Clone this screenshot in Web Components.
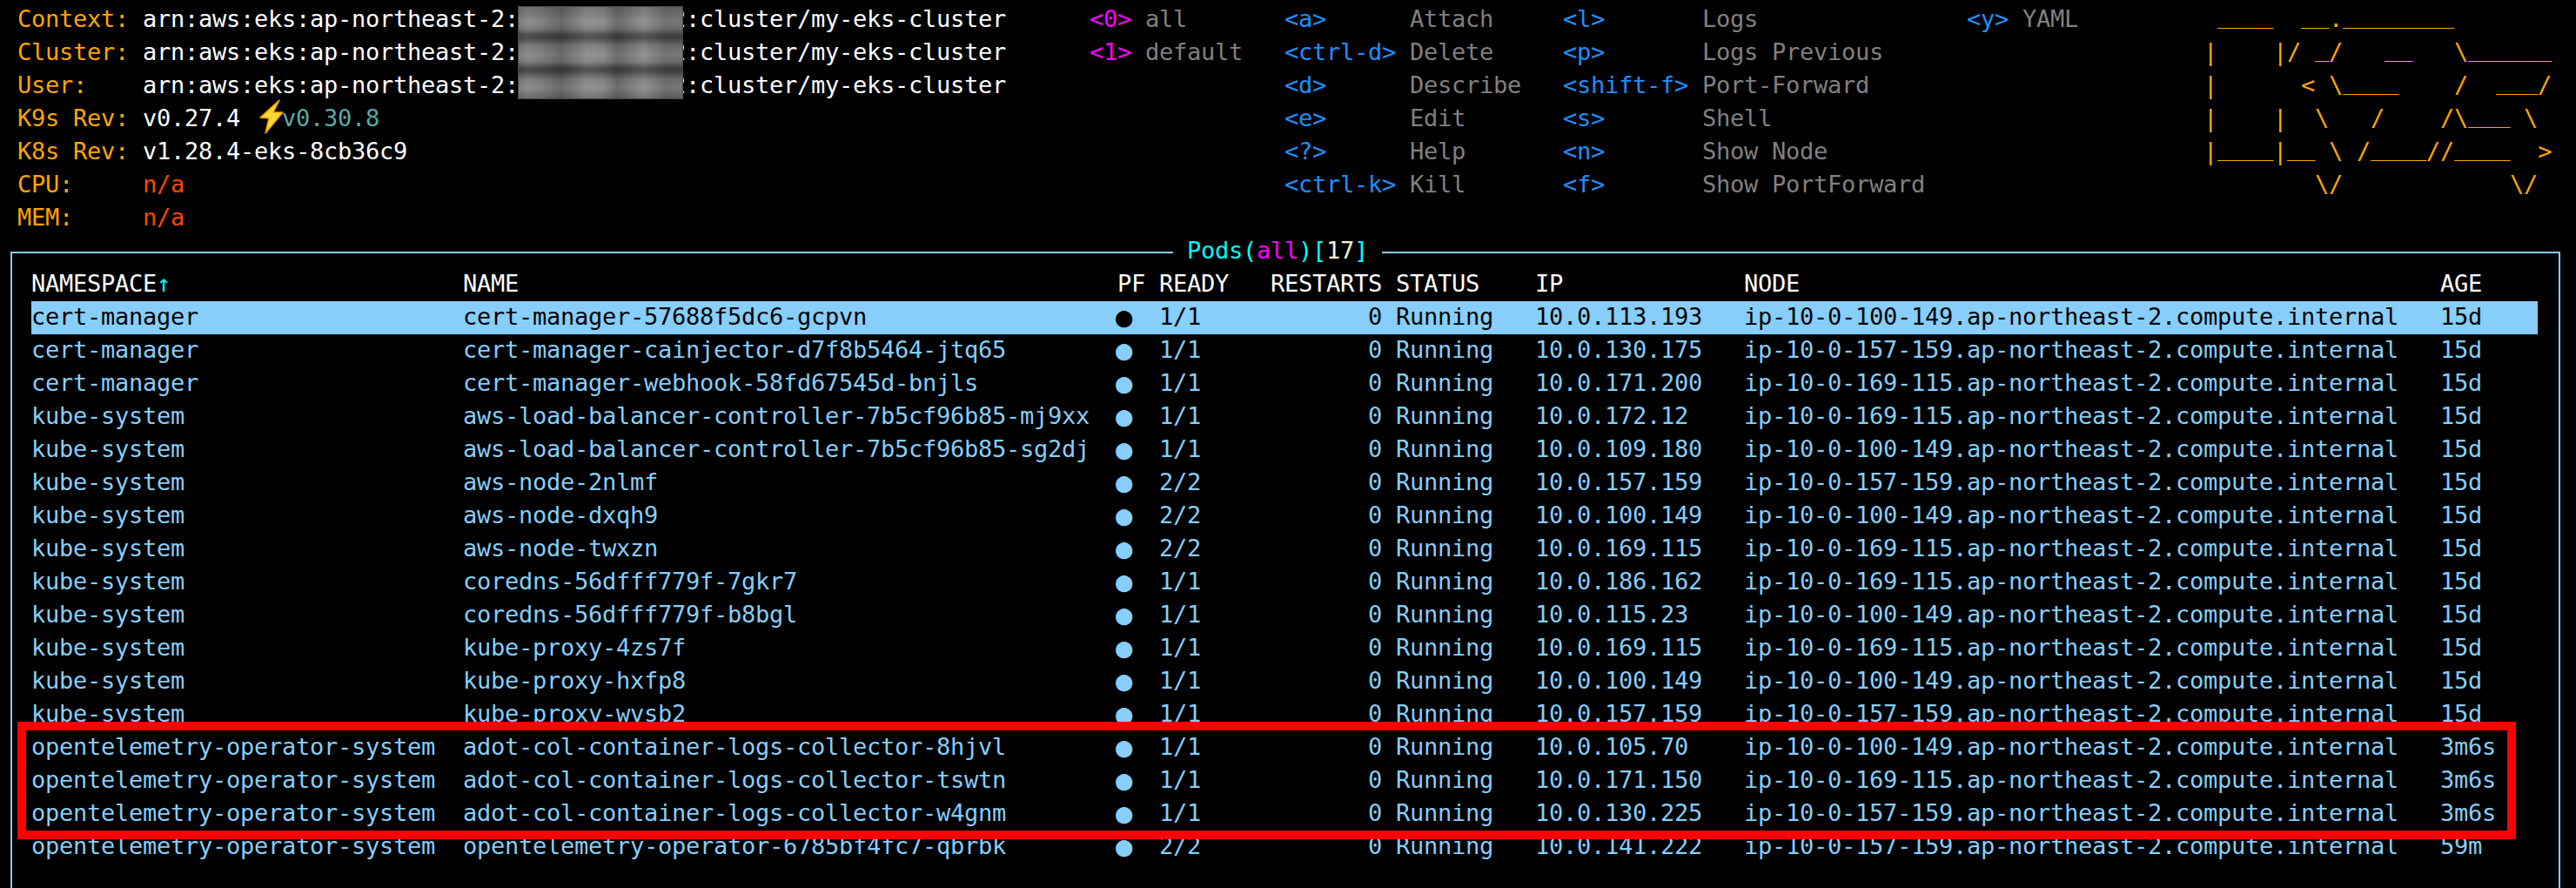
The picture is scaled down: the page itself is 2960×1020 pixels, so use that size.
<!DOCTYPE html>
<html><head><meta charset="utf-8">
<style>
html,body{margin:0;padding:0;background:#000;height:1020px;overflow:hidden}
body{font-family:"DejaVu Sans Mono",monospace;font-size:27px;letter-spacing:-.255px;line-height:36px;color:#fff}
</style></head>
<body>
<k9s-app>
  <k9s-header></k9s-header>
  <k9s-pods>
    <span slot="title"><i style="color:#0ff;font-style:normal">Pods(</i><i style="color:#f0f;font-style:normal">all</i><i style="color:#0ff;font-style:normal">)[</i><i style="color:#ffefd5;font-style:normal">17</i><i style="color:#0ff;font-style:normal">]</i></span>
  </k9s-pods>
</k9s-app>
<script>
const C=n=>n*16+'px';
class K9sApp extends HTMLElement{constructor(){super();this.attachShadow({mode:'open'}).innerHTML=`
<style>:host{display:block;position:relative;padding:4px 0 0 4px;height:1016px;overflow:hidden}
.mark{position:absolute;left:20px;top:829px;width:2871px;height:135px;box-sizing:border-box;border:10px solid #f00;pointer-events:none}</style>
<slot></slot><div class="mark"></div>`}}
class K9sInfo extends HTMLElement{constructor(){super();const arn=`arn:aws:eks:ap-northeast-2:           2:cluster/my-eks-cluster`;
const rows=[['Context:',arn],['Cluster:',arn],['User:',arn],
['K9s Rev:','v0.27.4 <svg class="bolt" width="32" height="36" viewBox="0 0 32 36"><path d="M29-3 7 17l10 1-4 17L33 11H22z" fill="#ffd93b" stroke="#f59e00" stroke-width="1.5" stroke-linejoin="round"/></svg><b>v0.30.8</b>'],
['K8s Rev:','v1.28.4-eks-8cb36c9'],['CPU:','<u>n/a</u>'],['MEM:','<u>n/a</u>']];
this.attachShadow({mode:'open'}).innerHTML=`<style>
:host{display:grid;grid-template-columns:${C(9)} 1fr;grid-auto-rows:38px;position:relative;align-content:start;white-space:pre}
.k{color:#ffa500}.v{color:#fff}b{font-weight:400;color:#5aa9a9}u{text-decoration:none;color:#ff4500}
.bolt{vertical-align:top;overflow:visible}
.blur{position:absolute;left:${595-20}px;top:3px;width:190px;height:107px;box-shadow:inset 0 0 0 1px #4a4a4a;
background:
 linear-gradient(90deg,rgba(0,0,0,.1) 0,rgba(255,255,255,.03) 6%,rgba(0,0,0,.04) 14%,rgba(0,0,0,.22) 26%,rgba(255,255,255,.08) 42%,rgba(255,255,255,.03) 52%,rgba(0,0,0,.2) 60%,rgba(255,255,255,.07) 76%,rgba(0,0,0,.16) 90%,rgba(0,0,0,.12) 100%),
 linear-gradient(180deg,#6a6a6a 0,#8a8a8a 18px,#7c7c7c 26px,#4a4a4a 33px,#4a4a4a 37px,#7c7c7c 46px,#8a8a8a 56px,#7c7c7c 64px,#484848 71px,#484848 75px,#7c7c7c 84px,#8a8a8a 94px,#666 107px)}
</style>${rows.map(r=>`<div class="k">${r[0]}</div><div class="v">${r[1]}</div>`).join('')}<div class="blur"></div>`}}
class K9sMenu extends HTMLElement{constructor(){super();
const [kw,dw]=this.getAttribute('cols').split(',').map(Number);const col=this.getAttribute('color');
const items=this.getAttribute('items').split('|').filter(Boolean).map(s=>s.split('='));
this.attachShadow({mode:'open'}).innerHTML=`<style>:host{display:grid;grid-template-columns:${C(kw)} ${C(dw)};grid-auto-rows:38px;align-content:start;white-space:pre}
.k{color:${col}}.d{color:#808080}</style>${items.map(i=>`<div class="k">&lt;${i[0]}&gt;</div><div class="d">${i[1]}</div>`).join('')}`}}
class K9sLogo extends HTMLElement{constructor(){super();
const lines=[" ____  __.________       ","|    |/ _/   __   \\______","|      < \\____    /  ___/","|    |  \\   /    /\\___ \\ ","|____|__ \\ /____//____  >","        \\/            \\/ "];
const esc=s=>s.replace(/</g,'&lt;').replace(/>/g,'&gt;').replace(/_+/g,m=>`<s>${m}</s>`);
this.attachShadow({mode:'open'}).innerHTML=`<style>:host{display:grid;grid-auto-rows:38px;align-content:start;color:#ffa500;white-space:pre}
s{text-decoration:none;vertical-align:4px;line-height:0}</style>${lines.map(l=>`<div>${esc(l)}</div>`).join('')}`}}
class K9sHeader extends HTMLElement{constructor(){super();
this.attachShadow({mode:'open'}).innerHTML=`<style>:host{display:grid;height:266px;padding-left:16px;grid-template-columns:${C(77)} ${C(14)} ${C(20)} ${C(29)} ${C(17)} 1fr}</style>
<k9s-info></k9s-info>
<k9s-menu cols="4,10" color="#f0f" items="0=all|1=default"></k9s-menu>
<k9s-menu cols="9,11" color="#1e90ff" items="a=Attach|ctrl-d=Delete|d=Describe|e=Edit|?=Help|ctrl-k=Kill"></k9s-menu>
<k9s-menu cols="10,19" color="#1e90ff" items="l=Logs|p=Logs Previous|shift-f=Port-Forward|s=Shell|n=Show Node|f=Show PortForward"></k9s-menu>
<k9s-menu cols="4,13" color="#1e90ff" items="y=YAML"></k9s-menu>
<k9s-logo></k9s-logo>`}}
class K9sRow extends HTMLElement{constructor(){super();
const c=this.getAttribute('cells').split('|');
this.attachShadow({mode:'open'}).innerHTML=`<style>
:host{display:grid;height:38px;white-space:pre;grid-template-columns:${C(31)} ${C(47)} ${C(3)} ${C(8)} ${C(8)} ${C(1)} ${C(10)} ${C(15)} ${C(50)} ${C(7)};color:#87cefa}
:host([selected]){background:#87cefa;color:#000}
:host([head]){color:#fff}
.r{text-align:right}em{font-style:normal;color:#0ff}
.dot{font-size:32px;letter-spacing:0;margin-left:-2px}
</style>`+c.map((t,i)=>i==5?'<span></span>':`<span class="${i==4?'r':t=='●'?'dot':''}">${t}</span>`).join('')}}
class K9sPods extends HTMLElement{constructor(){super();
const N='.ap-northeast-2.compute.internal',ns1='cert-manager',ns2='kube-system',ns3='opentelemetry-operator-system',ad='adot-col-container-logs-collector-',lb='aws-load-balancer-controller-7b5cf96b85-';
const d=[[ns1,'cert-manager-57688f5dc6-gcpvn','1/1','10.0.113.193','100-149','15d'],
[ns1,'cert-manager-cainjector-d7f8b5464-jtq65','1/1','10.0.130.175','157-159','15d'],
[ns1,'cert-manager-webhook-58fd67545d-bnjls','1/1','10.0.171.200','169-115','15d'],
[ns2,lb+'mj9xx','1/1','10.0.172.12','169-115','15d'],
[ns2,lb+'sg2dj','1/1','10.0.109.180','100-149','15d'],
[ns2,'aws-node-2nlmf','2/2','10.0.157.159','157-159','15d'],
[ns2,'aws-node-dxqh9','2/2','10.0.100.149','100-149','15d'],
[ns2,'aws-node-twxzn','2/2','10.0.169.115','169-115','15d'],
[ns2,'coredns-56dfff779f-7gkr7','1/1','10.0.186.162','169-115','15d'],
[ns2,'coredns-56dfff779f-b8bgl','1/1','10.0.115.23','100-149','15d'],
[ns2,'kube-proxy-4zs7f','1/1','10.0.169.115','169-115','15d'],
[ns2,'kube-proxy-hxfp8','1/1','10.0.100.149','100-149','15d'],
[ns2,'kube-proxy-wvsb2','1/1','10.0.157.159','157-159','15d'],
[ns3,ad+'8hjvl','1/1','10.0.105.70','100-149','3m6s'],
[ns3,ad+'tswtn','1/1','10.0.171.150','169-115','3m6s'],
[ns3,ad+'w4gnm','1/1','10.0.130.225','157-159','3m6s'],
[ns3,'opentelemetry-operator-6785bf4fc7-qbrbk','2/2','10.0.141.222','157-159','59m']];
const rows=d.map((r,i)=>`<k9s-row ${i==0?'selected':''} cells="${[r[0],r[1],'●',r[2],'0','','Running',r[3],'ip-10-0-'+r[4]+N,r[5]].join('|')}"></k9s-row>`).join('');
this.attachShadow({mode:'open'}).innerHTML=`<style>
:host{display:block;position:relative;box-sizing:border-box;margin:19px 0 0 8px;width:2930px;height:731px;border:2px solid #87cefa;border-bottom:0;padding:17px 0 0 22px}
.t{position:absolute;left:${1348-14}px;top:-21px;background:#000;padding:0 16px;height:38px}
.list{width:2880px}
</style><div class="t"><slot name="title"></slot></div>
<div class="list"><k9s-row head cells="NAMESPACE<em>↑</em>|NAME|PF|READY|RESTARTS||STATUS|IP|NODE|AGE"></k9s-row>${rows}</div>`}}
customElements.define('k9s-app',K9sApp);customElements.define('k9s-info',K9sInfo);customElements.define('k9s-menu',K9sMenu);customElements.define('k9s-logo',K9sLogo);customElements.define('k9s-row',K9sRow);customElements.define('k9s-pods',K9sPods);customElements.define('k9s-header',K9sHeader);
</script>
</body></html>
